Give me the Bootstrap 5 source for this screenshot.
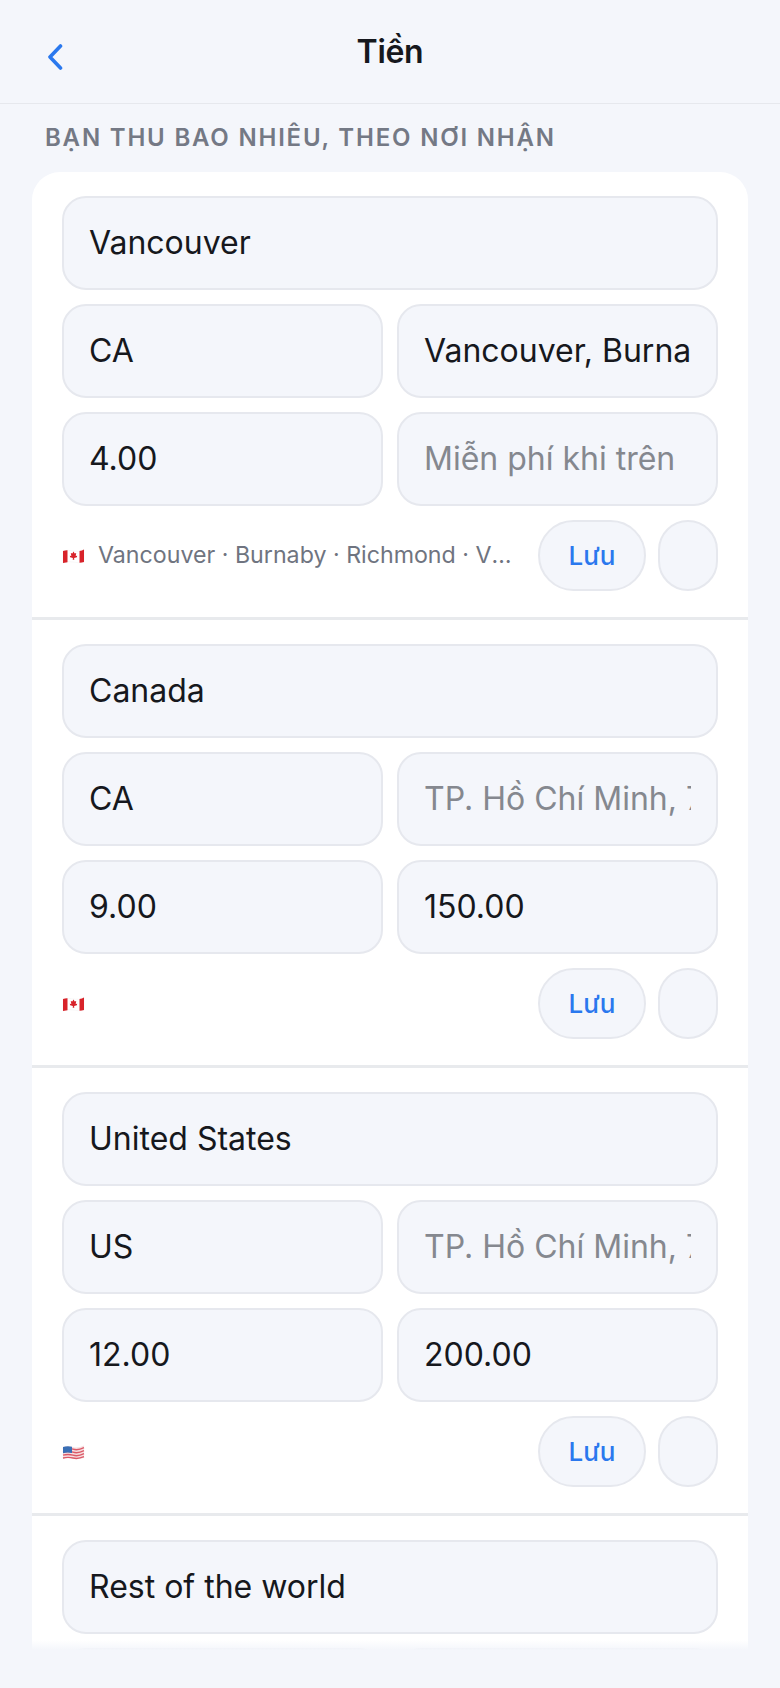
<!DOCTYPE html>
<html lang="vi">
<head>
    <meta charset="UTF-8">
    <meta name="viewport" content="width=device-width, initial-scale=1.0">
    <title>Tiền</title>
    <link href="https://cdn.jsdelivr.net/npm/bootstrap@5.3.0/dist/css/bootstrap.min.css" rel="stylesheet">
    <style>
        html, body { height: 1688px; overflow: hidden; }
        body { background: #f4f6fb; font-family: Inter, "Noto Sans", sans-serif; color: #16181d; }
        .page-clip { height: 1688px; overflow: hidden; position: relative; }
        .top-bar { height: 104px; border-bottom: 1px solid #e6e8ed; padding: 44px 0 0 46px; position: relative; }
        .top-bar svg { width: 18px; height: 26px; display: block; }
        .top-title { position: absolute; left: 0; right: 0; top: 28px; margin: 0; text-align: center; font-size: 32px; line-height: 48px; font-weight: 600; letter-spacing: -0.3px; }
        .section-title { margin: 19px 0 0 45px; height: 49px; font-size: 24px; line-height: 29px; font-weight: 600; letter-spacing: 1.8px; color: #747985; text-transform: uppercase; }
        .zone-list { margin: 0 32px; background: #fff; border-radius: 28px 28px 0 0; }
        .zone-item { padding: 24px 30px 26px; border-bottom: 3px solid #e8eaed; }
        .zone-item:last-child { border-bottom: 0; }
        .zone-input.form-control { height: 94px; padding: 0 25px 2px; background: #f4f6fb; border: 2px solid #e6e8ee; border-radius: 24px; color: #16181d; font-size: 32px; box-shadow: none; }
        .zone-input::placeholder { color: #85888f; opacity: 1; }
        .zone-grid { display: grid; grid-template-columns: 1fr 1fr; gap: 14px; margin-top: 14px; }
        .zone-foot { height: 71px; margin-top: 14px; }
        .flag-icon { width: 23px; height: 16px; flex: none; }
        .zone-cities { font-size: 23.2px; color: #6f7480; margin-left: 13px; width: 418px; flex: none; white-space: nowrap; overflow: hidden; text-overflow: ellipsis; }
        .pill-group { column-gap: 12px; }
        .pill-btn.btn { height: 71px; background: #f4f6fb; border: 2px solid #e6e8ee; border-radius: 36px; padding: 0; color: #2a78ee; font-size: 26px; font-weight: 500; }
        .pill-save { width: 108px; }
        .pill-del { width: 60px; }
        .bottom-fade { position: absolute; left: 0; right: 0; bottom: 0; height: 48px; background: linear-gradient(#f4f6fb00, #f4f6fb 10px); }
    </style>
</head>
<body>
    <div class="page-clip">
    <!-- Header -->
    <div class="top-bar">
        <svg viewBox="0 0 18 26" fill="none" stroke="#2a78ee" stroke-width="3.600" stroke-linecap="round" stroke-linejoin="round"><path d="M14.500 2 4 13l10.500 11"/></svg>
        <h1 class="top-title">Tiền</h1>
    </div>

    <p class="section-title">Bạn thu bao nhiêu, theo nơi nhận</p>

    <div class="zone-list">
        <!-- Vancouver -->
        <div class="zone-item">
            <input class="form-control zone-input" value="Vancouver">
            <div class="zone-grid">
                <input class="form-control zone-input" value="CA">
                <input class="form-control zone-input" value="Vancouver, Burnaby, Richmond">
                <input class="form-control zone-input" value="4.00">
                <input class="form-control zone-input" placeholder="Miễn phí khi trên">
            </div>
            <div class="zone-foot d-flex align-items-center">
                <svg class="flag-icon" viewBox="0 0 23 16"><path d="M1 3Q6 1.500 11 3T22 1.500V14Q17 15.500 11 14T1 15z" fill="#fff" stroke="#eee" stroke-width=".4"/><path d="M1 3Q3.500 2.200 5.500 2.300V14.200L1 15zM17.500 3Q20 2.600 22 1.500V14Q20 14.700 17.500 14.700z" fill="#d8232a"/><path d="m11.500 3.600 1.200 2 1.500-.6-.5 3 1.500-.3-.3 1.500-2.800.7.200 1.900h-1.600l.2-1.900-2.800-.7-.3-1.500 1.500.3-.5-3 1.500.6z" fill="#d8232a"/></svg>
                <span class="zone-cities">Vancouver · Burnaby · Richmond · Victoria</span>
                <div class="ms-auto d-flex pill-group">
                    <button class="btn pill-btn pill-save">Lưu</button>
                    <button class="btn pill-btn pill-del" aria-label="Xoá"></button>
                </div>
            </div>
        </div>
        <!-- Canada -->
        <div class="zone-item">
            <input class="form-control zone-input" value="Canada">
            <div class="zone-grid">
                <input class="form-control zone-input" value="CA">
                <input class="form-control zone-input" placeholder="TP. Hồ Chí Minh, 700000">
                <input class="form-control zone-input" value="9.00">
                <input class="form-control zone-input" value="150.00">
            </div>
            <div class="zone-foot d-flex align-items-center">
                <svg class="flag-icon" viewBox="0 0 23 16"><path d="M1 3Q6 1.500 11 3T22 1.500V14Q17 15.500 11 14T1 15z" fill="#fff" stroke="#eee" stroke-width=".4"/><path d="M1 3Q3.500 2.200 5.500 2.300V14.200L1 15zM17.500 3Q20 2.600 22 1.500V14Q20 14.700 17.500 14.700z" fill="#d8232a"/><path d="m11.500 3.600 1.200 2 1.500-.6-.5 3 1.500-.3-.3 1.500-2.800.7.200 1.900h-1.600l.2-1.900-2.800-.7-.3-1.500 1.500.3-.5-3 1.500.6z" fill="#d8232a"/></svg>
                <div class="ms-auto d-flex pill-group">
                    <button class="btn pill-btn pill-save">Lưu</button>
                    <button class="btn pill-btn pill-del" aria-label="Xoá"></button>
                </div>
            </div>
        </div>
        <!-- United States -->
        <div class="zone-item">
            <input class="form-control zone-input" value="United States">
            <div class="zone-grid">
                <input class="form-control zone-input" value="US">
                <input class="form-control zone-input" placeholder="TP. Hồ Chí Minh, 700000">
                <input class="form-control zone-input" value="12.00">
                <input class="form-control zone-input" value="200.00">
            </div>
            <div class="zone-foot d-flex align-items-center">
                <svg class="flag-icon" viewBox="0 0 23 16"><path d="M1 3Q6 1.500 11 3T22 1.500V14Q17 15.500 11 14T1 15z" fill="#f6dfe1"/><path d="M1 5.200Q6 3.700 11 5.200T22 3.700M1 8.200Q6 6.700 11 8.200T22 6.700M1 11.200Q6 9.700 11 11.200T22 9.700M1 14Q6 12.700 11 14T22 12.700" fill="none" stroke="#dc5a68" stroke-width="1.400"/><path d="M1 3Q5 1.800 10 2.700V9Q5 7.800 1 9.300z" fill="#3a6fb5"/></svg>
                <div class="ms-auto d-flex pill-group">
                    <button class="btn pill-btn pill-save">Lưu</button>
                    <button class="btn pill-btn pill-del" aria-label="Xoá"></button>
                </div>
            </div>
        </div>
        <!-- Rest of the world -->
        <div class="zone-item">
            <input class="form-control zone-input" value="Rest of the world">
            <div class="zone-grid">
                <input class="form-control zone-input" aria-label="Mã nước">
                <input class="form-control zone-input" aria-label="Thành phố">
            </div>
        </div>
    </div>

    <div class="bottom-fade"></div>
    </div>
</body>
</html>
